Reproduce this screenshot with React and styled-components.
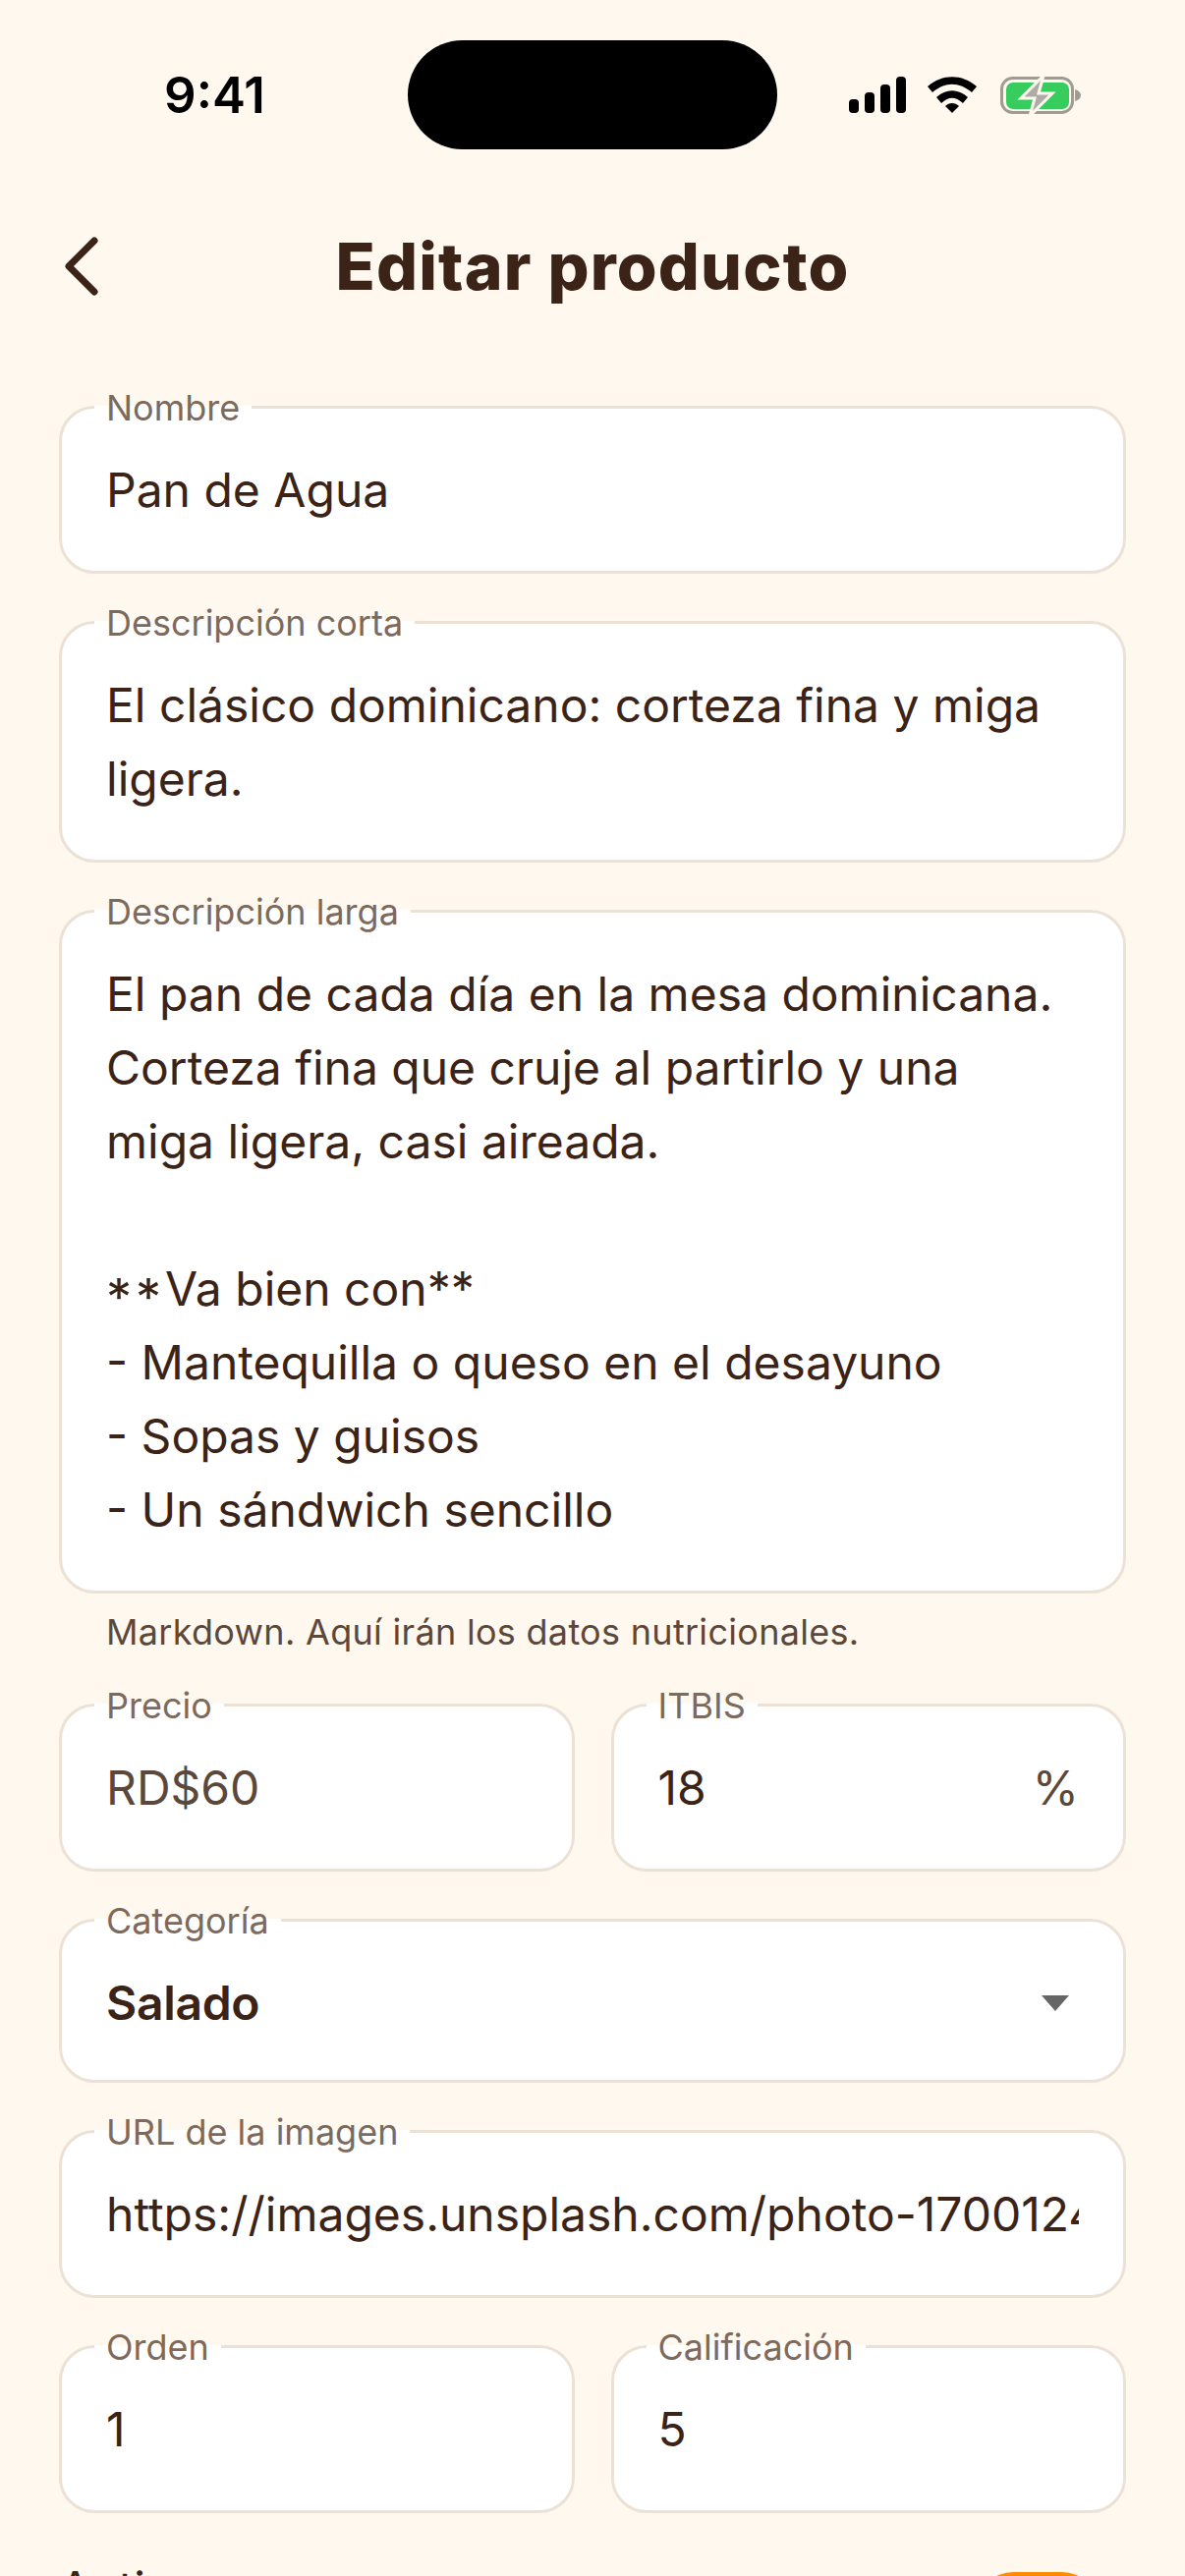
import React from 'react';
import styled, { createGlobalStyle } from 'styled-components';

const Global = createGlobalStyle`
  html, body { margin: 0; padding: 0; background: #fff8ef; }
  body { font-family: Inter, "Noto Sans", sans-serif; height: 2622px; overflow: hidden; }
`;

const Screen = styled.div`
  width: 1206px;
  height: 2622px;
  overflow: hidden;
  background: #fff8ef;
  color: #3b2417;
`;

const StatusBar = styled.div`
  box-sizing: border-box;
  height: 152px;
  padding-top: 41px;
  display: grid;
  grid-template-columns: 415px 376px 1fr;
  align-items: center;
`;

const Clock = styled.div`
  font: 600 51px Inter, sans-serif;
  color: #000;
  text-align: center;
  padding-left: 22px;
`;

const Island = styled.div`
  height: 111px;
  background: #000;
  border-radius: 56px;
`;

const StatusIcons = styled.div`
  display: flex;
  align-items: center;
  padding-left: 72px;
`;

const Header = styled.header`
  position: relative;
  display: flex;
  align-items: center;
  justify-content: center;
  height: 100px;
  margin-top: 69px;
`;

const BackIcon = styled.svg`
  position: absolute;
  left: 60px;
  top: 15px;
`;

const Title = styled.h1`
  margin: 0;
  font: 800 66px Inter, sans-serif;
  letter-spacing: 1.2px;
  color: #3b2417;
`;

const Form = styled.div`
  display: flex;
  flex-direction: column;
  gap: 26px;
  padding: 0 60px;
  margin-top: 70px;
`;

const Field = styled.fieldset`
  margin: 0;
  min-width: 0;
  background: #fff;
  border: 3px solid #ebe1d5;
  border-radius: 36px;
  padding: 24px 45px ${p => p.$compact ? 41 : 45}px;
  display: flex;
  align-items: center;
  justify-content: space-between;
`;

const Legend = styled.legend`
  margin-left: -12px;
  padding: 2px 12px 0;
  font-size: 36px;
  line-height: 44px;
  color: #7d6a5c;
`;

const Value = styled.div`
  font-size: 48px;
  line-height: 75px;
  white-space: pre-wrap;
  color: ${p => p.$muted ? '#5c483b' : '#3b2417'};
  font-weight: ${p => p.$bold ? 600 : 400};
  letter-spacing: ${p => p.$bold ? '-0.3px' : 'normal'};
`;

const Clipped = styled(Value)`
  white-space: nowrap;
  overflow: hidden;
`;

// the leading asterisks sit lower and wider than the trailing ones
const Stars = styled.span`
  font-size: 52px;
  line-height: 1;
  letter-spacing: 4px;
  vertical-align: -10px;
`;

const Row = styled.div`
  display: grid;
  grid-template-columns: 1fr 1fr;
  gap: 37px;
`;

const Hint = styled.div`
  font-size: 36px;
  line-height: 44px;
  letter-spacing: 0.3px;
  color: #5c483b;
  padding-left: 48px;
  margin-top: -9px;
  margin-bottom: 3px;
`;

const Suffix = styled.span`
  font-size: 48px;
  color: #5c483b;
`;

const Caret = styled.svg`
  margin-right: 10px;
`;

const ToggleRow = styled.div`
  display: flex;
  align-items: flex-start;
  justify-content: space-between;
  padding-top: 21px;
`;

const ToggleLabel = styled.div`
  font-size: 48px;
  line-height: 60px;
  color: #3b2417;
`;

const Toggle = styled.div`
  width: 122px;
  height: 72px;
  margin-top: 13px;
  margin-right: 29px;
  border-radius: 36px;
  background: #ff8c00;
`;

const Signal = () => (
  <svg width="60" height="38" viewBox="0 0 60 38" fill="#000">
    <rect x="1" y="23" width="10" height="14" rx="4" />
    <rect x="17" y="16" width="10" height="21" rx="4" />
    <rect x="33" y="8" width="10" height="29" rx="4" />
    <rect x="49" y="0" width="10" height="37" rx="4" />
  </svg>
);

const Wifi = () => (
  <svg width="50" height="38" viewBox="0 0 50 38" fill="#000" style={{ marginLeft: 21 }}>
    <path d="M0 10 C15 -3 35 -3 50 10 L45 16 C32 5 18 5 5 16 Z" />
    <path d="M9 21 C19 12 31 12 41 21 L36 27 C28 20 22 20 14 27 Z" />
    <path d="M18 30 C22 26 28 26 32 30 L25 37 Z" />
  </svg>
);

const Battery = () => (
  <svg width="82" height="42" viewBox="0 0 82 42" style={{ marginLeft: 24, marginTop: 2 }}>
    <rect x="1.5" y="2.5" width="72" height="35" rx="11" fill="none" stroke="#a09b93" strokeWidth="3" />
    <rect x="6" y="7" width="64" height="27" rx="7" fill="#36cc5e" />
    <path d="M76 14 C80 15 82 18 82 20 C82 23 80 25 76 26 Z" fill="#a09b93" />
    <path d="M44 0 L21 23 L35 23 L30 41 L53 18 L39 18 Z" fill="#b0aca5" stroke="#fff8ef" strokeWidth="3" />
  </svg>
);

export default function App() {
  return (
    <Screen>
      <Global />
      <StatusBar>
        <Clock>9:41</Clock>
        <Island />
        <StatusIcons>
          <Signal />
          <Wifi />
          <Battery />
        </StatusIcons>
      </StatusBar>
      <Header>
        <BackIcon width="44" height="70" viewBox="0 0 44 70" fill="none" stroke="#3b2417" strokeWidth="7" strokeLinecap="round" strokeLinejoin="round">
          <path d="M36 9 L10 35 L36 61" />
        </BackIcon>
        <Title>Editar producto</Title>
      </Header>
      <Form>
        <Field>
          <Legend>Nombre</Legend>
          <Value>Pan de Agua</Value>
        </Field>
        <Field>
          <Legend>Descripción corta</Legend>
          <Value>{'El clásico dominicano: corteza fina y miga\nligera.'}</Value>
        </Field>
        <Field>
          <Legend>Descripción larga</Legend>
          <Value>
            {'El pan de cada día en la mesa dominicana.\nCorteza fina que cruje al partirlo y una\nmiga ligera, casi aireada.\n\n'}
            <Stars>**</Stars>
            {'Va bien con**\n- Mantequilla o queso en el desayuno\n- Sopas y guisos\n- Un sándwich sencillo'}
          </Value>
        </Field>
        <Hint>Markdown. Aquí irán los datos nutricionales.</Hint>
        <Row>
          <Field>
            <Legend>Precio</Legend>
            <Value $muted>RD$60</Value>
          </Field>
          <Field>
            <Legend>ITBIS</Legend>
            <Value>18</Value>
            <Suffix>%</Suffix>
          </Field>
        </Row>
        <Field $compact>
          <Legend>Categoría</Legend>
          <Value $bold>Salado</Value>
          <Caret width="28" height="16" viewBox="0 0 28 16" fill="#666"><path d="M0 0 H28 L14 16 Z" /></Caret>
        </Field>
        <Field>
          <Legend>URL de la imagen</Legend>
          <Clipped>https://images.unsplash.com/photo-1700124163-abcdef</Clipped>
        </Field>
        <Row>
          <Field>
            <Legend>Orden</Legend>
            <Value>1</Value>
          </Field>
          <Field>
            <Legend>Calificación</Legend>
            <Value>5</Value>
          </Field>
        </Row>
        <ToggleRow>
          <ToggleLabel>Activo</ToggleLabel>
          <Toggle />
        </ToggleRow>
      </Form>
    </Screen>
  );
}
